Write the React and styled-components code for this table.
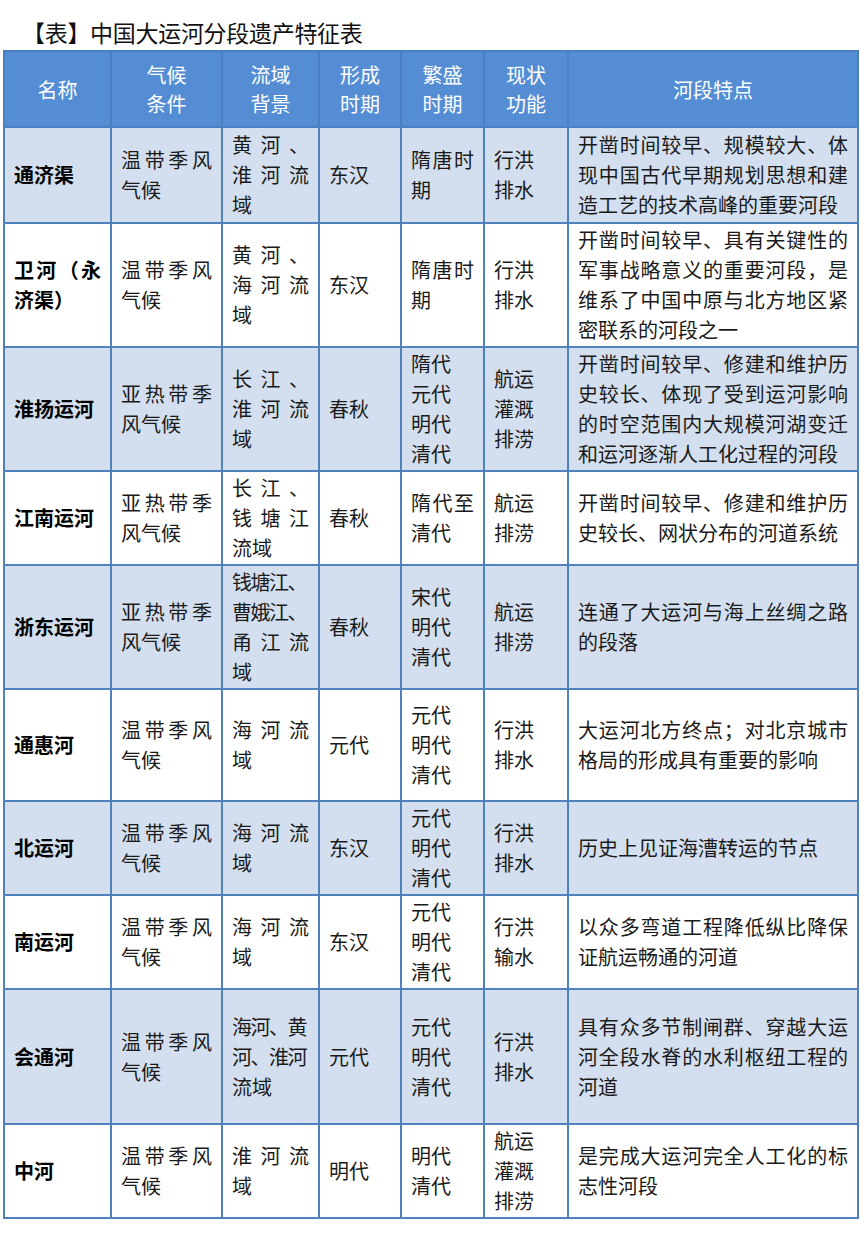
import React from 'react';
import styled, { createGlobalStyle } from 'styled-components';

const GlobalStyle = createGlobalStyle`
	body {
		margin: 0;
		background: #ffffff;
		font-family: 'Noto Sans CJK SC', 'Noto Sans', sans-serif;
	}
`;

const Page = styled.div`
	width: 860px;
	padding: 0 3px;
	box-sizing: border-box;
`;

const Title = styled.div`
	padding: 16px 0 0 19px;
	height: 34px;
	line-height: 32px;
	font-size: 23px;
	color: #111;
	letter-spacing: -0.3px;
`;

const Table = styled.table`
	width: 854px;
	border-collapse: collapse;
	table-layout: fixed;
	border: 2px solid #4f81bd;
`;

const HeadCell = styled.th`
	background: #548dd4;
	color: #ffffff;
	font-weight: 400;
	font-size: 20px;
	line-height: 29px;
	text-align: center;
	border: 2px solid #4a7fc1;
	height: ${(props) => props.h}px;
	padding: 0;
`;

const Row = styled.tr`
	background: ${(props) => (props.shade ? '#d3dfee' : '#ffffff')};
`;

const Cell = styled.td`
	border: 2px solid #4f81bd;
	height: ${(props) => props.h}px;
	padding: 0 9px 0 9px;
	vertical-align: middle;
	font-size: 20px;
	line-height: 30px;
	color: #1a1a1a;
	text-align: justify;
	text-justify: inter-character;
	word-break: break-all;
`;

const NameCell = styled(Cell)`
	font-weight: 700;
	color: #000;
	padding-left: 9px;
`;

const Ln = styled.span`
	display: block;
	white-space: nowrap;
	letter-spacing: ${(props) => (props.tight ? '-1.5px' : '0')};
`;

const widths = [107, 111, 97, 82, 83, 84, 290];

const rows = [
	{
		h: 94, name: '通济渠', climate: '温带季风气候', basin: '黄河、淮河流域', form: '东汉',
		peak: '隋唐时期', func: ['行洪', '排水'],
		desc: '开凿时间较早、规模较大、体现中国古代早期规划思想和建造工艺的技术高峰的重要河段',
	},
	{
		h: 122, name: '卫河（永济渠）', climate: '温带季风气候', basin: '黄河、海河流域', form: '东汉',
		peak: '隋唐时期', func: ['行洪', '排水'],
		desc: '开凿时间较早、具有关键性的军事战略意义的重要河段，是维系了中国中原与北方地区紧密联系的河段之一',
	},
	{
		h: 122, name: '淮扬运河', climate: '亚热带季风气候', basin: '长江、淮河流域', form: '春秋',
		peak: ['隋代', '元代', '明代', '清代'], func: ['航运', '灌溉', '排涝'],
		desc: '开凿时间较早、修建和维护历史较长、体现了受到运河影响的时空范围内大规模河湖变迁和运河逐渐人工化过程的河段',
	},
	{
		h: 92, name: '江南运河', climate: '亚热带季风气候', basin: '长江、钱塘江流域', form: '春秋',
		peak: '隋代至清代', func: ['航运', '排涝'],
		desc: '开凿时间较早、修建和维护历史较长、网状分布的河道系统',
	},
	{
		h: 122, name: '浙东运河', climate: '亚热带季风气候',
		basin: (
			<>
				<Ln tight>钱塘江、</Ln>
				<Ln tight>曹娥江、</Ln>
				甬江流域
			</>
		),
		form: '春秋', peak: ['宋代', '明代', '清代'], func: ['航运', '排涝'],
		desc: '连通了大运河与海上丝绸之路的段落',
	},
	{
		h: 110, name: '通惠河', climate: '温带季风气候', basin: '海河流域', form: '元代',
		peak: ['元代', '明代', '清代'], func: ['行洪', '排水'],
		desc: '大运河北方终点；对北京城市格局的形成具有重要的影响',
	},
	{
		h: 92, name: '北运河', climate: '温带季风气候', basin: '海河流域', form: '东汉',
		peak: ['元代', '明代', '清代'], func: ['行洪', '排水'],
		desc: '历史上见证海漕转运的节点',
	},
	{
		h: 92, name: '南运河', climate: '温带季风气候', basin: '海河流域', form: '东汉',
		peak: ['元代', '明代', '清代'], func: ['行洪', '输水'],
		desc: '以众多弯道工程降低纵比降保证航运畅通的河道',
	},
	{
		h: 133, name: '会通河', climate: '温带季风气候',
		basin: (
			<>
				<Ln tight>海河、黄</Ln>
				<Ln tight>河、淮河</Ln>
				<Ln>流域</Ln>
			</>
		),
		form: '元代', peak: ['元代', '明代', '清代'], func: ['行洪', '排水'],
		desc: '具有众多节制闸群、穿越大运河全段水脊的水利枢纽工程的河道',
	},
	{
		h: 92, name: '中河', climate: '温带季风气候', basin: '淮河流域', form: '明代',
		peak: ['明代', '清代'], func: ['航运', '灌溉', '排涝'],
		desc: '是完成大运河完全人工化的标志性河段',
	},
];

function Lines({ items }) {
	if (!Array.isArray(items)) return items;
	return items.map((t) => <Ln key={t}>{t}</Ln>);
}

export default function App() {
	const heads = [['名称'], ['气候', '条件'], ['流域', '背景'], ['形成', '时期'], ['繁盛', '时期'], ['现状', '功能'], ['河段特点']];
	return (
		<Page>
			<GlobalStyle />
			<Title>【表】中国大运河分段遗产特征表</Title>
			<Table>
				<colgroup>
					{widths.map((w, i) => (
						<col key={i} style={{ width: w }} />
					))}
				</colgroup>
				<thead>
					<tr>
						{heads.map((h, i) => (
							<HeadCell key={i} h={74}>
								{h.map((t, j) => (
									<div key={j}>{t}</div>
								))}
							</HeadCell>
						))}
					</tr>
				</thead>
				<tbody>
					{rows.map((r, i) => (
						<Row key={r.name} shade={i % 2 === 0}>
							<NameCell h={r.h}>{r.name}</NameCell>
							<Cell h={r.h}>{r.climate}</Cell>
							<Cell h={r.h}>{r.basin}</Cell>
							<Cell h={r.h}>{r.form}</Cell>
							<Cell h={r.h}>
								<Lines items={r.peak} />
							</Cell>
							<Cell h={r.h}>
								<Lines items={r.func} />
							</Cell>
							<Cell h={r.h}>{r.desc}</Cell>
						</Row>
					))}
				</tbody>
			</Table>
		</Page>
	);
}
